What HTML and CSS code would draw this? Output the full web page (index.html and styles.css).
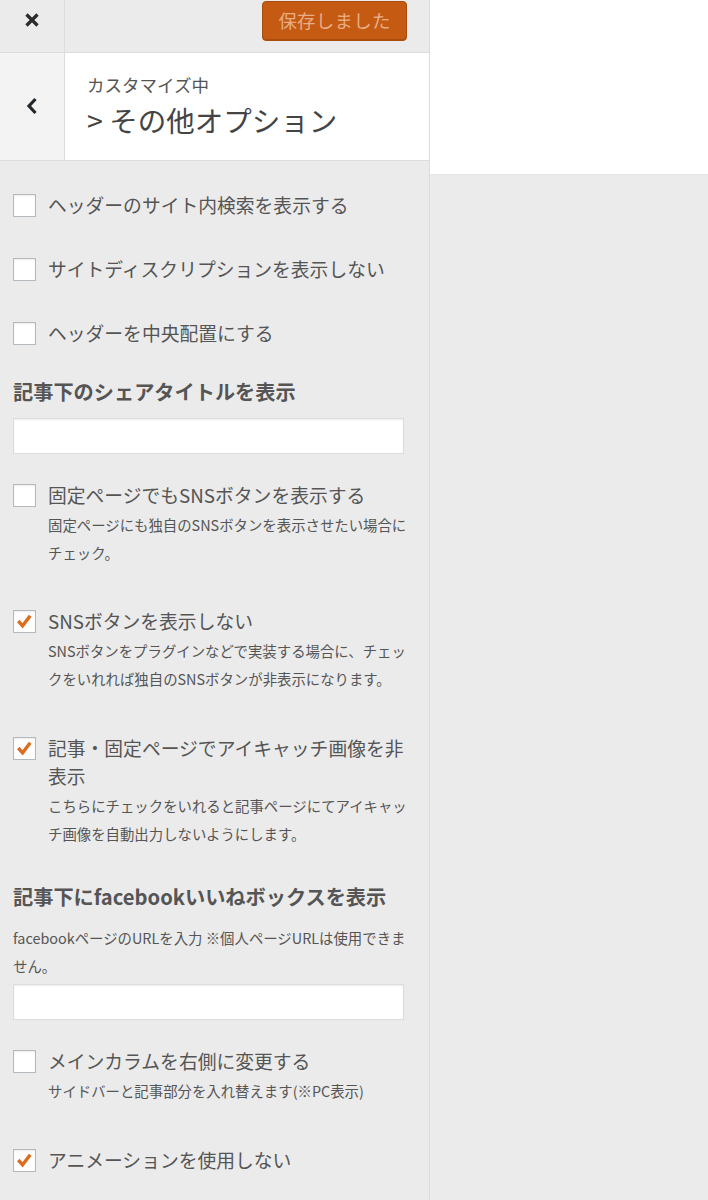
FILE: index.html
```html
<!DOCTYPE html>
<html lang="ja">
<head>
<meta charset="utf-8">
<title>カスタマイズ</title>
<link rel="stylesheet" href="styles.css">
</head>
<body>
<div class="layout">
  <aside class="sidebar">
    <header class="topbar">
      <button class="close" aria-label="閉じる">
        <svg width="16" height="16" viewBox="0 0 16 16"><path d="M2.5 2.5 L13.5 13.5 M13.5 2.5 L2.5 13.5" stroke="#2b2b2b" stroke-width="3.2" fill="none"/></svg>
      </button>
      <button class="save">保存しました</button>
    </header>
    <div class="titlebar">
      <button class="back" aria-label="戻る">
        <svg width="14" height="18" viewBox="0 0 14 18"><path d="M10.5 2 L4 9 L10.5 16" stroke="#23282d" stroke-width="3.2" fill="none"/></svg>
      </button>
      <div class="title">
        <div class="title-sub">カスタマイズ中</div>
        <div class="title-main">&gt; その他オプション</div>
      </div>
    </div>
    <ul class="controls">
      <li class="control">
        <label class="check"><span class="box"></span><span class="label">ヘッダーのサイト内検索を表示する</span></label>
      </li>
      <li class="control">
        <label class="check"><span class="box"></span><span class="label">サイトディスクリプションを表示しない</span></label>
      </li>
      <li class="control control-before-heading">
        <label class="check"><span class="box"></span><span class="label">ヘッダーを中央配置にする</span></label>
      </li>
      <li class="control control-field">
        <div class="heading">記事下のシェアタイトルを表示</div>
        <div class="input"></div>
      </li>
      <li class="control control-desc control-desc-first">
        <label class="check"><span class="box"></span><span class="label">固定ページでもSNSボタンを表示する</span></label>
        <p class="desc">固定ページにも独自のSNSボタンを表示させたい場合にチェック。</p>
      </li>
      <li class="control control-desc">
        <label class="check"><span class="box checked"><svg viewBox="0 0 22 22"><path d="M4.5 10.5 L9 15.5 L17 5" stroke="#dd6d1f" stroke-width="3.6" fill="none"/></svg></span><span class="label">SNSボタンを表示しない</span></label>
        <p class="desc">SNSボタンをプラグインなどで実装する場合に、チェックをいれれば独自のSNSボタンが非表示になります。</p>
      </li>
      <li class="control control-desc-heading">
        <label class="check"><span class="box checked"><svg viewBox="0 0 22 22"><path d="M4.5 10.5 L9 15.5 L17 5" stroke="#dd6d1f" stroke-width="3.6" fill="none"/></svg></span><span class="label">記事・固定ページでアイキャッチ画像を非表示</span></label>
        <p class="desc">こちらにチェックをいれると記事ページにてアイキャッチ画像を自動出力しないようにします。</p>
      </li>
      <li class="control control-field">
        <div class="heading heading-desc">記事下にfacebookいいねボックスを表示</div>
        <p class="desc desc-wide">facebookページのURLを入力 ※個人ページURLは使用できません。</p>
        <div class="input input-tight"></div>
      </li>
      <li class="control control-desc">
        <label class="check"><span class="box"></span><span class="label">メインカラムを右側に変更する</span></label>
        <p class="desc">サイドバーと記事部分を入れ替えます(※PC表示)</p>
      </li>
      <li class="control">
        <label class="check"><span class="box checked"><svg viewBox="0 0 22 22"><path d="M4.5 10.5 L9 15.5 L17 5" stroke="#dd6d1f" stroke-width="3.6" fill="none"/></svg></span><span class="label">アニメーションを使用しない</span></label>
      </li>
    </ul>
  </aside>
  <main class="preview">
    <div class="preview-top"></div>
  </main>
</div>
</body>
</html>
```

FILE: styles.css
```css
* { box-sizing: border-box; }
html, body {
  margin: 0;
  padding: 0;
  background: #ebebeb;
  font-family: "Noto Sans CJK JP", "Noto Sans", sans-serif;
  color: #555;
}
.layout {
  display: flex;
  min-height: 1200px;
}
.sidebar {
  width: 430px;
  flex: none;
  background: #ebebeb;
  border-right: 1px solid #dcdcdc;
  min-height: 1200px;
}
.topbar {
  display: flex;
  height: 53px;
  border-bottom: 1px solid #dcdcdc;
}
.close {
  width: 65px;
  height: 52px;
  border: 0;
  border-right: 1px solid #dcdcdc;
  background: #ebebeb;
  display: flex;
  align-items: center;
  justify-content: center;
  padding: 0 0 12px 0;
}
.save {
  margin: 1px 22px 0 auto;
  width: 145px;
  height: 40px;
  background: #c55a12;
  border: 1px solid #a94c0d;
  border-radius: 4px;
  color: #e8ad86;
  font-family: "Noto Sans CJK JP", sans-serif;
  font-size: 18.5px;
  letter-spacing: 0.2px;
  padding: 0 0 2px 0;
  box-shadow: inset 0 -1px 0 #a94c0d;
}
.titlebar {
  display: flex;
  background: #fff;
  border-bottom: 1px solid #dcdcdc;
  height: 108px;
}
.back {
  width: 65px;
  border: 0;
  border-right: 1px solid #dcdcdc;
  background: #f3f3f3;
  display: flex;
  align-items: center;
  justify-content: center;
  padding: 0 0 2px 0;
}
.title {
  padding: 20px 0 0 22px;
  color: #444;
}
.title-sub {
  font-size: 17.5px;
  line-height: 24px;
  color: #555;
}
.title-main {
  font-size: 28.5px;
  line-height: 42px;
  color: #444;
  margin-top: 2px;
}
.controls {
  list-style: none;
  margin: 0;
  padding: 30px 13px 0 13px;
}
.control {
  margin: 0 0 36px 0;
}
.control-before-heading { margin-bottom: 31px; }
.control-field { margin-bottom: 27px; }
.control-desc { margin-bottom: 41px; }
.control-desc-first { margin-bottom: 40px; }
.control-desc-heading { margin-bottom: 35px; }
.check {
  display: flex;
  align-items: flex-start;
  gap: 12px;
}
.box {
  flex: none;
  width: 23px;
  height: 23px;
  margin-top: 3px;
  background: #fff;
  border: 1px solid #b4b9be;
  box-shadow: inset 0 1px 2px rgba(0,0,0,0.08);
  display: block;
}
.box svg {
  display: block;
  width: 21px;
  height: 21px;
}
.label {
  font-size: 18.8px;
  line-height: 28px;
  color: #555;
  width: 365px;
}
.desc {
  margin: 2px 0 0 35px;
  font-size: 14.4px;
  line-height: 28px;
  color: #555;
  width: 368px;
}
.heading {
  font-size: 20.2px;
  line-height: 28px;
  font-weight: bold;
  color: #555;
  margin-bottom: 12px;
}
.heading-desc { margin-bottom: 13px; }
.desc-wide {
  margin: 0;
  width: 400px;
}
.input {
  width: 391px;
  height: 36px;
  background: #fff;
  border: 1px solid #dcdcdc;
  box-shadow: inset 0 1px 2px rgba(0,0,0,0.07);
}
.input-tight { margin-top: 4px; }
.preview {
  flex: 1;
}
.preview-top {
  height: 175px;
  background: #fff;
  border-bottom: 1px solid #e6e6e6;
}
```
